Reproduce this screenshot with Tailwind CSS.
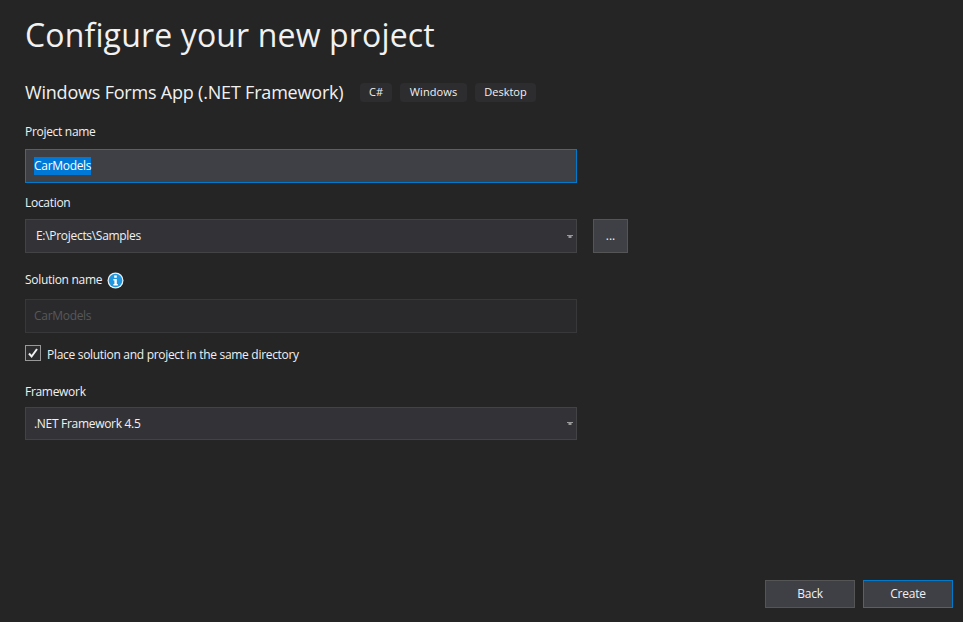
<!DOCTYPE html>
<html>
<head>
<meta charset="utf-8">
<script src="https://cdn.jsdelivr.net/npm/@tailwindcss/browser@4"></script>
</head>
<body class="m-0">
<div class="w-[963px] h-[622px] bg-[#252526] text-[#f1f1f1] font-['Open_Sans','Noto_Sans',sans-serif] flex flex-col overflow-hidden pl-[25px] pr-[10px] pb-[14px]">
  <h1 class="mt-[14px] h-[42px] leading-[42px] text-[32px] font-normal tracking-[0.15px] whitespace-nowrap">Configure your new project</h1>
  <div class="mt-[26px] h-[20px] flex items-center">
    <span class="text-[18px] leading-[20px] tracking-[-0.2px] whitespace-nowrap w-[335px]">Windows Forms App (.NET Framework)</span>
    <div class="flex gap-2">
      <span class="w-[32px] h-[19px] rounded-[4px] bg-[#2d2d30] text-[11px] leading-[18px] text-center">C#</span>
      <span class="w-[67px] h-[19px] rounded-[4px] bg-[#2d2d30] text-[11px] leading-[18px] text-center tracking-[0.1px]">Windows</span>
      <span class="w-[61px] h-[19px] rounded-[4px] bg-[#2d2d30] text-[11px] leading-[18px] text-center">Desktop</span>
    </div>
  </div>
  <label class="mt-[22px] h-[16px] leading-[16px] text-[12px] tracking-[-0.3px]">Project name</label>
  <div class="mt-[9px] w-[552px] h-[34px] bg-[#3f3f46] border border-[#007acc] flex items-center pl-[8px] text-[12px] tracking-[-0.3px]">
    <span class="bg-[#0078d7] text-white h-[18px] leading-[18px]">CarModels</span>
  </div>
  <label class="mt-[12px] h-[16px] leading-[16px] text-[12px] tracking-[-0.3px]">Location</label>
  <div class="mt-[8px] flex gap-[16px]">
    <div class="w-[552px] h-[34px] bg-[#333337] border border-[#434346] flex items-center justify-between pl-[10px] pr-[3px] text-[12px] tracking-[-0.3px]">
      <span>E:\Projects\Samples</span>
      <svg width="6" height="3" viewBox="0 0 6 3"><path d="M0 0H6V1H4.5V3H1.5V1H0Z" fill="#999999"/></svg>
    </div>
    <div class="w-[35px] h-[34px] bg-[#3f3f46] border border-[#555555] flex items-center justify-center text-[12px] leading-[16px]">...</div>
  </div>
  <div class="mt-[19px] h-[16px] flex items-center gap-[5px]">
    <label class="leading-[16px] text-[12px] tracking-[-0.3px]">Solution name</label>
    <svg width="17" height="17" viewBox="0 0 17 17"><circle cx="8.5" cy="8.5" r="8" fill="#f1f1f1"/><circle cx="8.5" cy="8.5" r="6.8" fill="#1e96e0"/><rect x="7.2" y="3.4" width="2.6" height="2.4" fill="#fff"/><path d="M6.4 7H9.8V12H10.8V13.6H6.4V12H7.4V8.6H6.4Z" fill="#fff"/></svg>
  </div>
  <div class="mt-[11px] w-[552px] h-[34px] bg-[#2a2a2c] border border-[#38383b] flex items-center pl-[8px] text-[12px] tracking-[-0.3px] text-[#58585a]">CarModels</div>
  <div class="mt-[12px] h-[16px] flex items-center gap-[6px]">
    <div class="w-[16px] h-[16px] bg-[#2d2d30] border border-[#999999] flex items-center justify-center">
      <svg width="12" height="12" viewBox="0 0 12 12"><path d="M2 6.5L4.6 9.5L10 2" fill="none" stroke="#f1f1f1" stroke-width="2"/></svg>
    </div>
    <label class="leading-[16px] text-[12px] tracking-[-0.3px] pt-[4px]">Place solution and project in the same directory</label>
  </div>
  <label class="mt-[23px] h-[16px] leading-[16px] text-[12px] tracking-[-0.3px]">Framework</label>
  <div class="mt-[7px] w-[552px] h-[33px] bg-[#333337] border border-[#434346] flex items-center justify-between pl-[8px] pr-[3px] text-[12px] tracking-[-0.3px]">
    <span>.NET Framework 4.5</span>
    <svg width="6" height="3" viewBox="0 0 6 3"><path d="M0 0H6V1H4.5V3H1.5V1H0Z" fill="#999999"/></svg>
  </div>
  <div class="mt-auto flex justify-end gap-[8px]">
    <div class="w-[90px] h-[28px] bg-[#3f3f46] border border-[#555555] flex items-center justify-center text-[12px] tracking-[-0.2px]">Back</div>
    <div class="w-[90px] h-[28px] bg-[#3f3f46] border border-[#007acc] flex items-center justify-center text-[12px] tracking-[-0.2px]">Create</div>
  </div>
</div>
</body>
</html>
